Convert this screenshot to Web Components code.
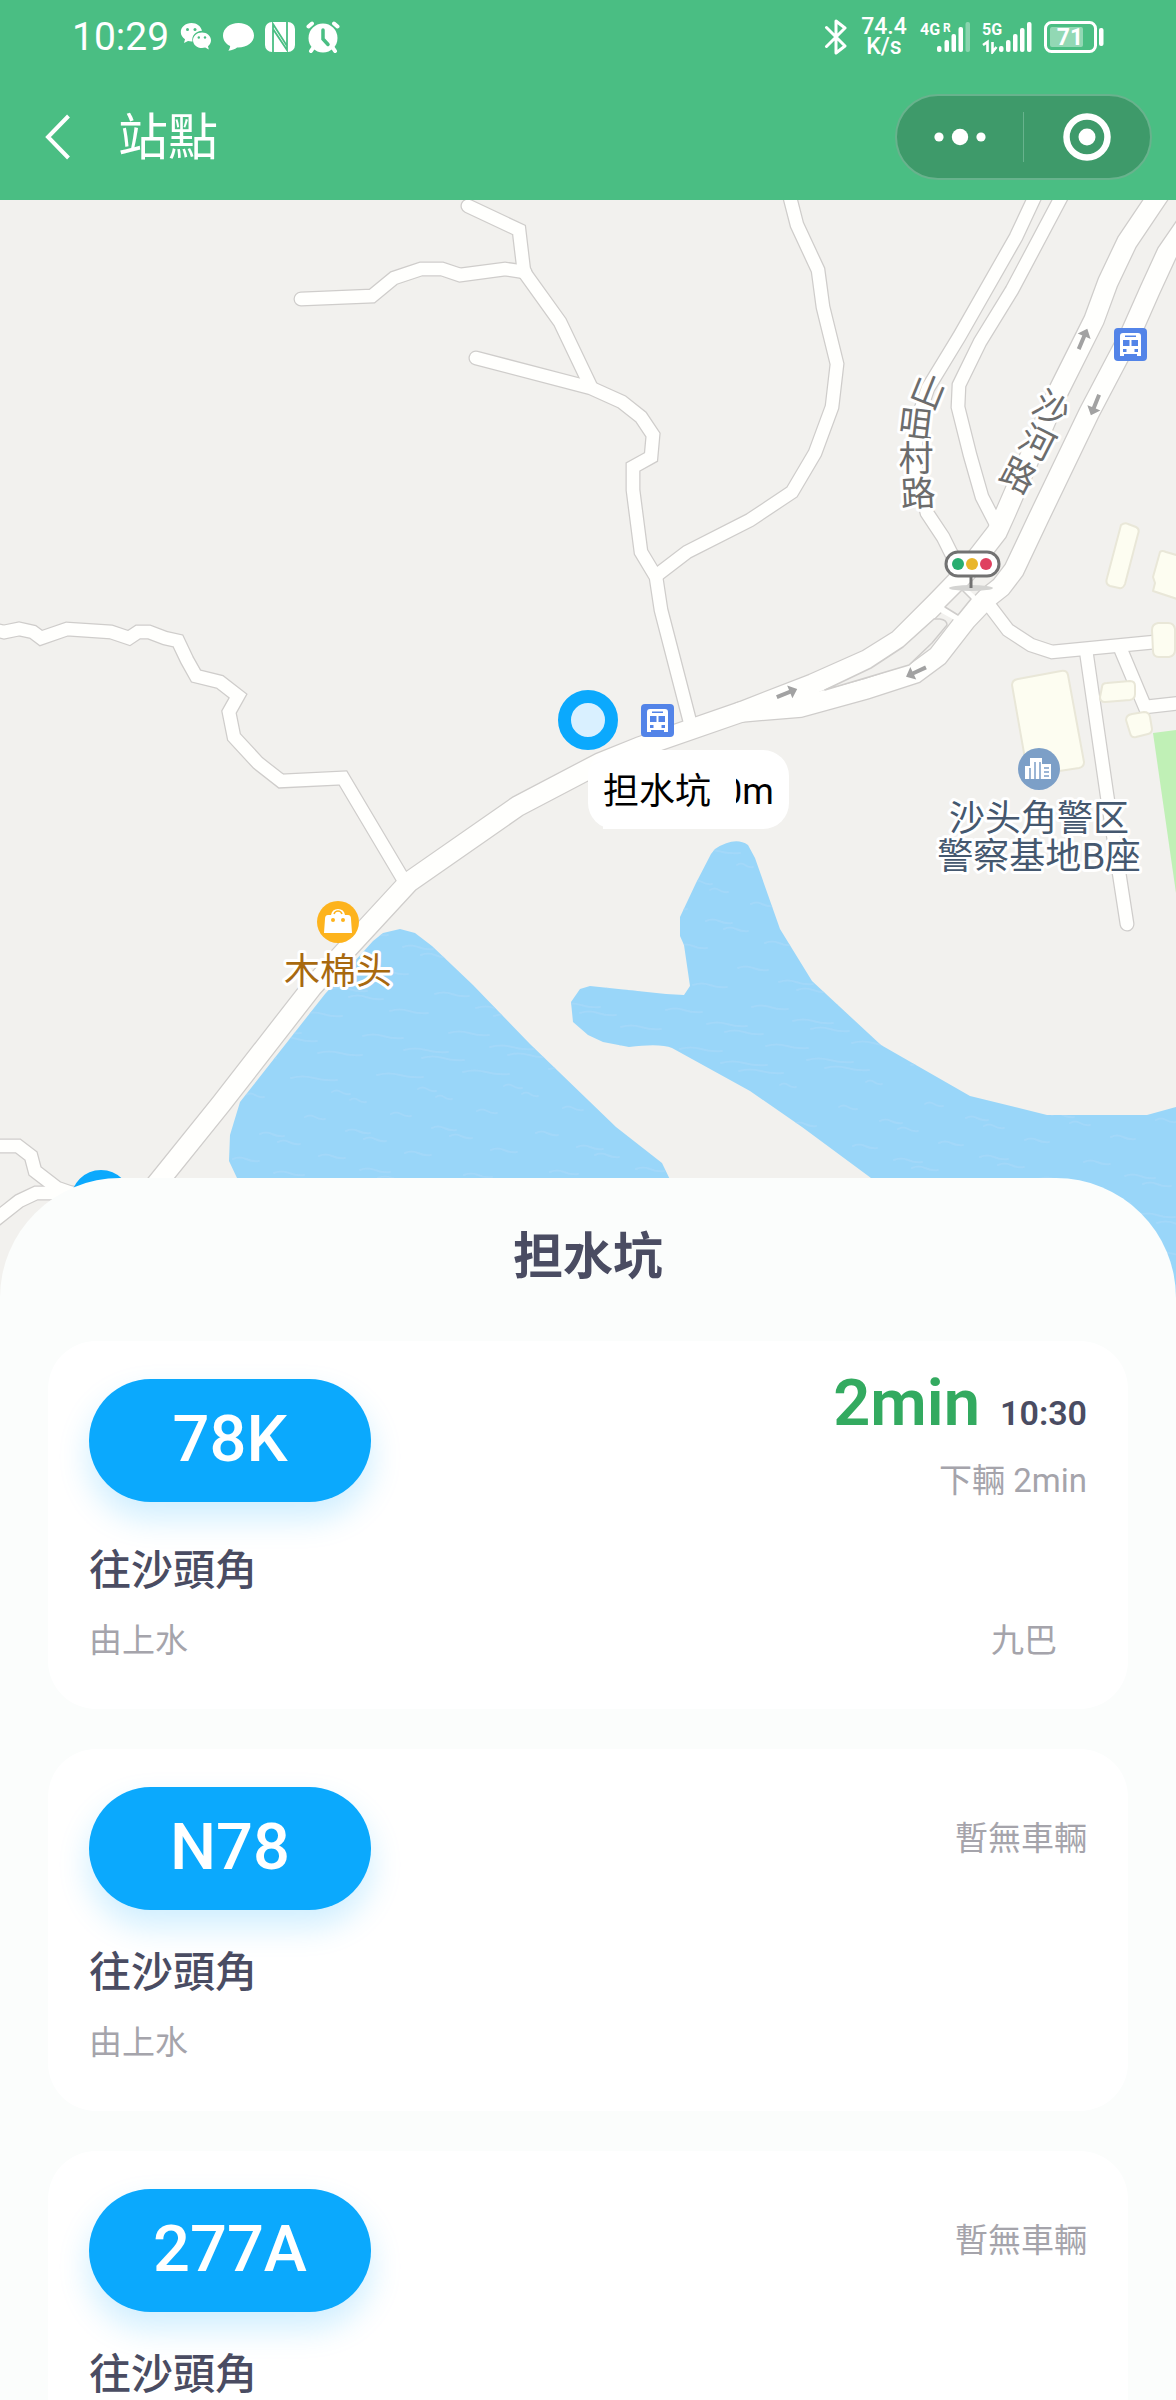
<!DOCTYPE html>
<html lang="zh-Hant">
<head>
<meta charset="utf-8">
<meta name="viewport" content="width=device-width, initial-scale=1">
<title>站點</title>
<style>
  html, body { margin: 0; height: 100%; }
  body { font-family: Roboto, "Noto Sans CJK TC", sans-serif; background: #fbfdfc; color: #4a4c62; }
</style>
</head>
<body>
<transit-app>
  <status-bar slot="top"></status-bar>
  <nav-bar slot="top">站點</nav-bar>
  <station-map></station-map>
  <stop-sheet>
    <span slot="title">担水坑</span>
    <route-card>
      <span slot="route">78K</span>
      <eta-info slot="eta" wait="2min" clock="10:30">下輛 2min</eta-info>
      <span slot="to">往沙頭角</span>
      <span slot="from">由上水</span>
      <span slot="operator">九巴</span>
    </route-card>
    <route-card>
      <span slot="route">N78</span>
      <eta-info slot="eta">暫無車輛</eta-info>
      <span slot="to">往沙頭角</span>
      <span slot="from">由上水</span>
    </route-card>
    <route-card>
      <span slot="route">277A</span>
      <eta-info slot="eta">暫無車輛</eta-info>
      <span slot="to">往沙頭角</span>
    </route-card>
  </stop-sheet>
</transit-app>

<script>
const define = (name, html, ready) => customElements.define(name, class extends HTMLElement {
  constructor() {
    super();
    this.attachShadow({ mode: "open" }).innerHTML = html;
  }
  connectedCallback() { if (ready) ready(this, this.shadowRoot); }
});

define("transit-app", `
  <style>
    :host { display: flex; flex-direction: column; height: 100vh; overflow: hidden; }
    header { background: #4abe83; color: #fff; flex: none; }
    main { flex: 1; min-height: 0; overflow-y: auto; scrollbar-width: none; }
  </style>
  <header><slot name="top"></slot></header>
  <main><slot></slot></main>`);

define("status-bar", `
  <style>
    :host { display: flex; justify-content: space-between; align-items: center; height: 73px; padding: 0 72px; }
    div { display: flex; align-items: center; }
    svg { display: block; flex: none; }
    .left { gap: 11px; }
    .time { font-size: 39px; line-height: 48px; font-weight: 400; }
    .right { gap: 12px; }
    .speed { display: block; width: 48px; font-size: 23px; line-height: 20px; font-weight: 500; text-align: center; }
    svg text { font-family: Roboto, sans-serif; fill: #fff; font-weight: 700; }
  </style>
  <div class="left">
    <span class="time">10:29</span>
    <svg width="32" height="30" viewBox="0 0 32 30" fill="#fff">
      <path d="M11.500 1C5.500 1 .800 5 .800 10c0 3 1.600 5.500 4.200 7.200L4 21l4-2c1.200.300 2.300.500 3.600.500h.900C11.300 13.500 16 9 22 8.800 21 4.200 16.800 1 11.500 1z"/>
      <path d="M22 10.500c-5 0-9 3.400-9 7.800s4 7.800 9 7.800c1.200 0 2.200-.2 3.200-.5l3.600 2-.8-3.400c1.900-1.500 3-3.500 3-5.900 0-4.400-4-7.800-9-7.800z"/>
      <g fill="#4abe83"><circle cx="7.500" cy="7.500" r="1.500"/><circle cx="15" cy="7.500" r="1.500"/><circle cx="18.800" cy="15.500" r="1.200"/><circle cx="25" cy="15.500" r="1.200"/></g>
    </svg>
    <svg width="31" height="30" viewBox="0 0 31 30" fill="#fff"><path d="M15.500 1C7 1 0 6.500 0 13.400c0 4.700 2.800 8.600 7.200 10.600-.2 1.800-.8 3.300-1.800 4.800 3.800-.6 6.500-1.700 8.700-3.400C23.500 25.900 31 20.300 31 13.400 31 6.500 24 1 15.500 1z"/></svg>
    <svg width="30" height="30" viewBox="0 0 30 30"><rect width="30" height="30" rx="7" fill="#fff"/><path d="M8 30V2l14 22V8.500M22 0v28L8 7v14.500" fill="none" stroke="#4abe83" stroke-width="1.800"/></svg>
    <svg width="34" height="32" viewBox="0 0 34 32"><g stroke="#fff" stroke-width="4" stroke-linecap="round"><path d="M2.500 5.500l3.500-3M31.500 5.500l-3.500-3M7 27l-2 3M27 27l2 3"/></g><circle cx="17" cy="17" r="14.500" fill="#fff"/><path d="M17 9v9l5 5.500" fill="none" stroke="#4abe83" stroke-width="3.500" stroke-linecap="round"/></svg>
  </div>
  <div class="right">
    <svg width="24" height="36" viewBox="0 0 24 36" fill="none" stroke="#fff" stroke-width="3" stroke-linejoin="round" stroke-linecap="round"><path d="M2.500 8.500L21 27l-9 7V2l9 7L2.500 27.500"/></svg>
    <span class="speed">74.4<br>K/s</span>
    <svg width="50" height="34" viewBox="0 0 50 34"><text x="0" y="15" font-size="16">4G</text><text x="23" y="12" font-size="12">R</text>
      <g fill="#fff"><rect x="17" y="26" width="4.500" height="6" rx="2"/><rect x="24.500" y="20" width="4.500" height="12" rx="2"/><rect x="31.500" y="14" width="4.500" height="18" rx="2"/><rect x="38.500" y="7" width="4.500" height="25" rx="2"/><rect x="45.500" y="2" width="4.500" height="30" rx="2" opacity=".35"/></g></svg>
    <svg width="50" height="34" viewBox="0 0 50 34"><text x="0" y="15" font-size="16">5G</text>
      <path d="M1 25l4.500-3v10M10.500 22v10l4-5" fill="none" stroke="#fff" stroke-width="2.600"/>
      <g fill="#fff"><rect x="17" y="26" width="4.500" height="6" rx="2"/><rect x="24" y="20" width="4.500" height="12" rx="2"/><rect x="31" y="14" width="4.500" height="18" rx="2"/><rect x="38" y="8" width="4.500" height="24" rx="2"/><rect x="45" y="2" width="4.500" height="30" rx="2"/></g></svg>
    <svg width="60" height="32" viewBox="0 0 60 32"><rect x="1.500" y="1.500" width="50" height="29" rx="6" fill="none" stroke="#fff" stroke-width="3"/><rect x="6" y="6" width="33" height="20" rx="2" fill="#fff" opacity=".4"/><rect x="55" y="7" width="4.500" height="18" rx="2" fill="#fff"/><text x="26" y="24" font-size="23" text-anchor="middle">71</text></svg>
  </div>`);

define("nav-bar", `
  <style>
    :host { display: flex; align-items: center; height: 127px; box-sizing: border-box; padding: 0 24px 0 34px; gap: 36px; }
    button { border: 0; margin: 0; padding: 0; background: none; color: inherit; display: grid; place-items: center; }
    h1 { flex: 1; margin: 0; padding-top: 3px; font-size: 50px; line-height: 72px; font-weight: 400; }
    .capsule { display: flex; align-items: center; width: 257px; height: 86px; box-sizing: border-box; border: 2px solid #68b38d; border-radius: 43px; background: #3e9a6a; }
    .capsule button { flex: 1; height: 82px; }
    i { width: 1px; height: 50px; background: #68b38d; }
    svg { display: block; }
  </style>
  <button aria-label="返回"><svg width="48" height="48" viewBox="0 0 48 48" fill="none" stroke="#fff" stroke-width="4"><path d="M34.500 3L14 24l20.500 21"/></svg></button>
  <h1><slot></slot></h1>
  <div class="capsule">
    <button aria-label="更多"><svg width="52" height="18" viewBox="0 0 52 18" fill="#fff"><circle cx="5" cy="9" r="4.600"/><circle cx="26" cy="9" r="8.200"/><circle cx="47" cy="9" r="4.600"/></svg></button>
    <i></i>
    <button aria-label="關閉"><svg width="48" height="48" viewBox="0 0 48 48"><circle cx="24" cy="24" r="20.500" fill="none" stroke="#fff" stroke-width="6.500"/><circle cx="24" cy="24" r="8.500" fill="#fff"/></svg></button>
  </div>`);

/* Centre lines of the roads, in map units. */
const lanes = [
  "468,206 519,230 524,272 560,322 591,387",
  "301,299 372,296 394,278 421,269 442,269 460,275 505,269 525,272",
  "476,358 591,388 622,402 641,417 653,435 651,457 633,467 633,490 641,552 656,577 661,610 690,722",
  "788,190 797,225 818,270 823,307 837,364 832,407 815,453 792,492 750,520 687,552 657,575",
  "1038,190 1016,237 959,337 928,388 916,424 916,470 927,513 943,537 951,553 962,572",
  "1065,190 1012,290 980,342 959,385 958,407 970,455 982,497 995,522",
  "989,605 1008,630 1031,645 1052,652 1155,642",
  "1086,650 1107,795 1127,924",
  "1121,650 1145,707 1190,702",
  "-10,629 4,632 19,629 33,632 41,638 67,629 111,632 129,638 138,632 149,632 165,638 178,641 187,660 196,676 220,682 238,696 229,712 234,737 258,763 281,781 343,778 406,884",
  "-10,1146 18,1146 31,1156 35,1171 57,1188 80,1196",
  "-10,1224 19,1201 36,1193 80,1193"
];
const avenues = [
  "1162,190 1127,242 1108,282 1094,320 1058,392 1006,512 997,532 966,572 936,603 899,640 867,660 813,684 741,712 640,747 600,763 518,806 409,882 312,987 221,1104 130,1217",
  "1200,205 1167,253 1150,290 1131,333 1089,413 1039,517 1014,570 1001,587 987,598 966,620 938,656 915,673 866,689 800,707 741,712"
];
const line = (w, c) => p => `<polyline points="${p}" stroke="${c}" stroke-width="${w}"/>`;
const arrow = (x, y, a) => `<path transform="translate(${x} ${y}) rotate(${a})" d="M-11-2H3v-5l8 7-8 7v-5h-14z" fill="#a2a2a2"/>`;
const bus = (x, y) => `<g transform="translate(${x} ${y})"><rect width="33" height="33" rx="4" fill="#5384e8"/><path d="M6 8q0-3 3-3h15q3 0 3 3v20h-4v-2H10v2H6z" fill="#fff"/><path d="M11 7.500h11v1.500H11zM9 12h6.500v6H9zM17.500 12H24v6h-6.500zM9 21h3.500v3H9zM20.500 21H24v3h-3.500z" fill="#5384e8"/></g>`;
const label = (x, y, a, t) => `<text transform="translate(${x} ${y}) rotate(${a})" y="12">${t}</text>`;
let ripples = "";
for (let i = 0; i < 320; i++) {
  const x = 230 + (i * 173) % 937, y = 850 + (i * 97) % 443, n = 8 + (i * 7) % 16;
  ripples += `M${x} ${y}q${n / 2}-3 ${n} 0t${n} 2`;
}
const pond = "M373 941L383 933 400 929 415 933 432 946 473 985 530 1044 616 1127 662 1163 675 1190V1300H250L237 1178 229 1161 230 1135 240 1102 325 994z";
const bay = "M715 849Q735 836 748 845L755 858 780 929 812 981 881 1045 970 1096 1047 1115H1147L1180 1106V1300H1000L871 1178 802 1127 750 1091 672 1048Q660 1043 629 1047L603 1042 588 1035 573 1022 571 1002 580 989 590 986 666 994 684 995 690 986 684 945 680 936V917L696 883 711 854z";

define("station-map", `
  <style>
    :host { display: block; position: relative; background: #f2f1ee; }
    svg { display: block; width: 100%; height: auto; }
    text { font-family: "Noto Sans CJK SC", sans-serif; text-anchor: middle; paint-order: stroke; stroke: #fff; stroke-width: 6px; stroke-linejoin: round; }
    .road { font-size: 35px; fill: #6c6c6c; }
    .poi { font-size: 36px; }
    .callout { position: absolute; left: 50%; top: 50%; box-sizing: border-box; display: flex; height: 79px; padding: 18px 15px 0; border-radius: 26px; background: #fff; color: #000; font-size: 36px; line-height: 48px; }
    .callout b { font-weight: 400; position: relative; background: #fff; padding-right: 25px; }
    .callout span { margin-left: -14px; }
  </style>
  <svg viewBox="0 200 1176 1100" role="img" aria-label="地圖">
    <defs><clipPath id="sea"><path d="${pond}"/><path d="${bay}"/></clipPath></defs>
    <path d="M1153 733l30-4v190l-7-26z" fill="#c0f0b6"/>
    <path d="${pond}${bay}" fill="#99d6f9"/>
    <path d="${ripples}" clip-path="url(#sea)" fill="none" stroke="#a6d9fa" stroke-width="2" stroke-linecap="round" opacity=".7"/>
    <g fill="none" stroke-linecap="round" stroke-linejoin="miter">
      ${lanes.map(line(15, "#cfcdcb")).join("")}${avenues.map(line(22, "#cfcdcb")).join("")}
      ${lanes.map(line(12.500, "#fffffd")).join("")}${avenues.map(line(19.500, "#fffffd")).join("")}
    </g>
    <path d="M940 612l22-28 16 14-20 24z" fill="#fffffd"/>
    <g fill="#f2f1ee" stroke="#cfcdcb" stroke-width="1.500" stroke-linejoin="round">
      <path d="M962 590l9 9-13 16-13-8zM934 619h6q7 1 7 6l-15 18-23 22-84 25 46-22 32-21z"/>
    </g>
    <g fill="#fdfdf1" stroke="#e9e7d8" stroke-width="2" stroke-linejoin="round">
      <path d="M1121 525q4-3 7-1l8 3q4 2 2 7l-13 50q-2 5-6 4l-9-2q-5-2-3-8zM1160 552q2-2 6 0l14 4v44l-27-9 2-8-2-6zM1152 630q0-6 6-7l10 0q6 0 7 6v21q0 6-6 7h-10q-6 0-6-6zM1012 685q0-5 6-6l43-8q6-1 7 4l16 87q0 5-5 6l-46 7q-5 0-6-5zM1102 687q0-4 5-4l23-2q5 0 5 5v8q0 5-5 6l-25 2q-5 0-5-5zM1126 720q0-5 6-6l12-2q5 0 6 5l2 12q0 4-4 5l-12 3q-5 1-6-4z"/>
    </g>
    ${arrow(1083, 339, -67)}${arrow(1095, 405, 112)}${arrow(916, 672, 155)}${arrow(787, 693, -22)}
    ${bus(1114, 328)}${bus(641, 704)}
    <g class="road">${label(928, 392, 22, "山")}${label(916, 424, 7, "咀")}${label(916, 459, 0, "村")}${label(918, 494, -3, "路")}
    ${label(1051, 409, 31, "沙")}${label(1037, 443, 27, "河")}${label(1018, 476, 27, "路")}</g>
    <ellipse cx="971" cy="588" rx="22" ry="3" fill="#d4d4d2"/><path d="M971 576v12" stroke="#727272" stroke-width="3"/>
    <rect x="946" y="552" width="53" height="24" rx="12" fill="#fff" stroke="#727272" stroke-width="3"/>
    <circle cx="958" cy="564" r="6" fill="#29ae70"/><circle cx="972" cy="564" r="6" fill="#e9b62c"/><circle cx="986" cy="564" r="6" fill="#df405f"/>
    <circle cx="338" cy="922" r="21" fill="#fdb31d"/><path d="M328 915h3q1-6 7-6t7 6h3q3 0 3 4l1 14h-28l1-14q0-4 3-4z" fill="#fff"/><path d="M334 914q1-3 4-3t4 3" fill="none" stroke="#fdb31d" stroke-width="1.500"/><circle cx="333" cy="920" r="2" fill="#fdb31d"/><circle cx="343" cy="920" r="2" fill="#fdb31d"/>
    <text class="poi" x="338" y="984" fill="#a8690f">木棉头</text>
    <circle cx="1039" cy="769" r="21" fill="#7c9fc7"/><path d="M1025 779v-13h5v-8h12v6h9v15z" fill="#fff"/><path d="M1030 779v-11M1035 779v-17M1040 779v-17M1044 768h5M1044 772h5M1044 776h5" stroke="#7c9fc7" stroke-width="1.500"/>
    <text class="poi" x="1039" y="831" fill="#45586f">沙头角警区</text><text class="poi" x="1039" y="869" fill="#45586f">警察基地B座</text>
    <circle cx="588" cy="720" r="23.500" fill="#d9f0ff" stroke="#0ba9fd" stroke-width="13"/>
    <circle cx="101" cy="1200" r="23.500" fill="#d9f0ff" stroke="#0ba9fd" stroke-width="13"/>
  </svg>
  <div class="callout"><b>担水坑</b><span>0m</span></div>`);

define("stop-sheet", `
  <style>
    :host { display: block; position: relative; margin-top: -122px; padding: 49px 48px 40px; background: #fbfdfc; border-radius: 120px 120px 0 0; }
    h2 { margin: 0 0 54px; text-align: center; font-size: 50px; line-height: 60px; font-weight: 700; }
    div { display: flex; flex-direction: column; gap: 40px; }
  </style>
  <h2><slot name="title"></slot></h2>
  <div><slot></slot></div>`);

define("route-card", `
  <style>
    :host { display: block; padding: 38px 41px 41px; border-radius: 48px; background: #fff; }
    .top, .bottom { display: flex; justify-content: space-between; align-items: flex-start; }
    .pill { width: 282px; height: 123px; line-height: 120px; border-radius: 62px; background: #0ba9fd; color: #fff; font-size: 65px; font-weight: 500; text-align: center; box-shadow: 0 16px 32px rgba(11,169,253,.2); }
    .to { margin-top: 36px; font-size: 42px; line-height: 54px; font-weight: 500; }
    .bottom { margin-top: 16px; min-height: 54px; font-size: 33px; line-height: 54px; color: #a5a4ab; }
    .op { margin-right: 30px; }
  </style>
  <div class="top"><div class="pill"><slot name="route"></slot></div><slot name="eta"></slot></div>
  <div class="to"><slot name="to"></slot></div>
  <div class="bottom"><slot name="from"></slot><div class="op"><slot name="operator"></slot></div></div>`);

define("eta-info", `
  <style>
    :host { display: block; text-align: right; font-size: 33px; line-height: 54px; color: #a5a4ab; padding-top: 25px; }
    :host([wait]) { padding-top: 0; }
    .now { display: flex; justify-content: flex-end; align-items: baseline; gap: 20px; height: 48px; margin-bottom: 27px; line-height: 48px; }
    .now[hidden] { display: none; }
    strong { font-size: 65px; font-weight: 600; color: #33aa60; }
    time { font-size: 34px; font-weight: 600; color: #4a4c62; }
  </style>
  <div class="now" hidden><strong></strong><time></time></div>
  <div><slot></slot></div>`,
  (el, root) => {
    if (!el.hasAttribute("wait")) return;
    root.querySelector(".now").hidden = false;
    root.querySelector("strong").textContent = el.getAttribute("wait");
    root.querySelector("time").textContent = el.getAttribute("clock");
  });
</script>
</body>
</html>
